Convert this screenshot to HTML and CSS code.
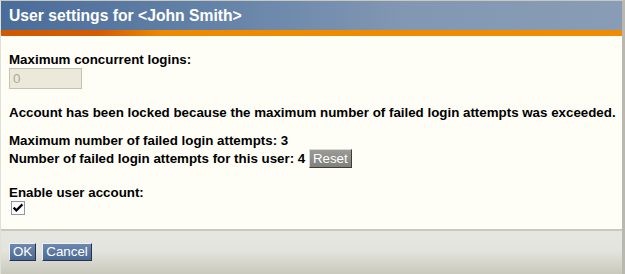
FILE: index.html
```html
<!DOCTYPE html>
<html>
<head>
<meta charset="utf-8">
<link rel="stylesheet" href="styles.css">
</head>
<body>
<div class="dialog">
  <div class="header">User settings for &lt;John Smith&gt;</div>
  <div class="accent"></div>
  <div class="content">
    <div class="field">
      <div class="label">Maximum concurrent logins:</div>
      <div class="input">0</div>
    </div>
    <div class="notice">Account has been locked because the maximum number of failed login attempts was exceeded.</div>
    <div class="attempts">
      <div class="line">Maximum number of failed login attempts: 3</div>
      <div class="line">Number of failed login attempts for this user: 4 <span class="btn gray">Reset</span></div>
    </div>
    <div class="enable">
      <div class="label">Enable user account:</div>
      <span class="check"><svg width="14" height="14" viewBox="0 0 14 14"><rect x="0.5" y="0.5" width="13" height="13" fill="#fdfdfd" stroke="#8e99a8"/><path d="M2.6 6.6 L5.4 9.4 L11.4 3.4" fill="none" stroke="#000" stroke-width="2.2" stroke-linejoin="miter"/></svg></span>
    </div>
  </div>
  <div class="footer">
    <span class="btn blue">OK</span>
    <span class="btn blue">Cancel</span>
  </div>
</div>
</body>
</html>
```
FILE: styles.css
```css
html, body {
  margin: 0;
  padding: 0;
  width: 625px;
  height: 274px;
  overflow: hidden;
  background: #fff;
}
.dialog {
  width: 625px;
  height: 274px;
  box-sizing: border-box;
  display: flex;
  flex-direction: column;
  border-top: 1px solid #c8c8c0;
  border-left: 1px solid #e0e0d8;
  border-right: 3px solid #b8b8b0;
  font-family: "Liberation Sans", Arial, sans-serif;
  background: #fefef7;
}
.header {
  height: 29px;
  line-height: 29px;
  padding-left: 8px;
  color: #fff;
  font-weight: bold;
  font-size: 15.7px;
  background: linear-gradient(to right, #4a6c99 0%, #6583a8 35%, #8297b2 65%, #889cb5 100%);
}
.accent {
  height: 6px;
  background: linear-gradient(to right, #d05800 0%, #d55d00 16%, #ee8a00 26%, #f08c00 100%);
}
.content {
  flex: 1;
  padding: 16px 0 0 8px;
  font-size: 13.33px;
  font-weight: bold;
  color: #000;
}
.label { line-height: 15px; }
.input {
  margin-top: 1px;
  width: 73px;
  height: 21px;
  box-sizing: border-box;
  border: 1px solid #c4c2b4;
  background: #ece9da;
  color: #a9a89f;
  font-weight: normal;
  line-height: 19px;
  padding-left: 3px;
}
.notice { margin-top: 16px; line-height: 15px; }
.attempts { margin-top: 12px; }
.line { line-height: 18px; }
.enable { margin-top: 16px; }
.btn {
  display: inline-block;
  font-weight: normal;
  color: #fff;
  font-size: 13.33px;
  line-height: 17px;
  padding: 0 3px;
  border: 1px solid;
  vertical-align: middle;
}
.btn.gray {
  background: linear-gradient(#9a9a96, #80807c);
  border-color: #d8d8d4 #3c3c3a #3c3c3a #d8d8d4;
  position: relative;
  top: -1px;
}
.check { display: block; margin-top: 1px; margin-left: 2px; height: 14px; }
.check svg { display: block; }
.footer {
  height: 45px;
  box-sizing: border-box;
  border-top: 2px solid #c8c8bf;
  background: linear-gradient(#e6e6e0 0%, #e4e4de 45%, #c9c9bd 100%);
  padding: 12px 0 0 8px;
  display: flex;
  gap: 6px;
  align-items: flex-start;
}
.btn.blue {
  line-height: 16px;
  background: linear-gradient(#6d89b0, #4b6892);
  border-color: #f0f0f0 #23344f #23344f #f0f0f0;
}
```
